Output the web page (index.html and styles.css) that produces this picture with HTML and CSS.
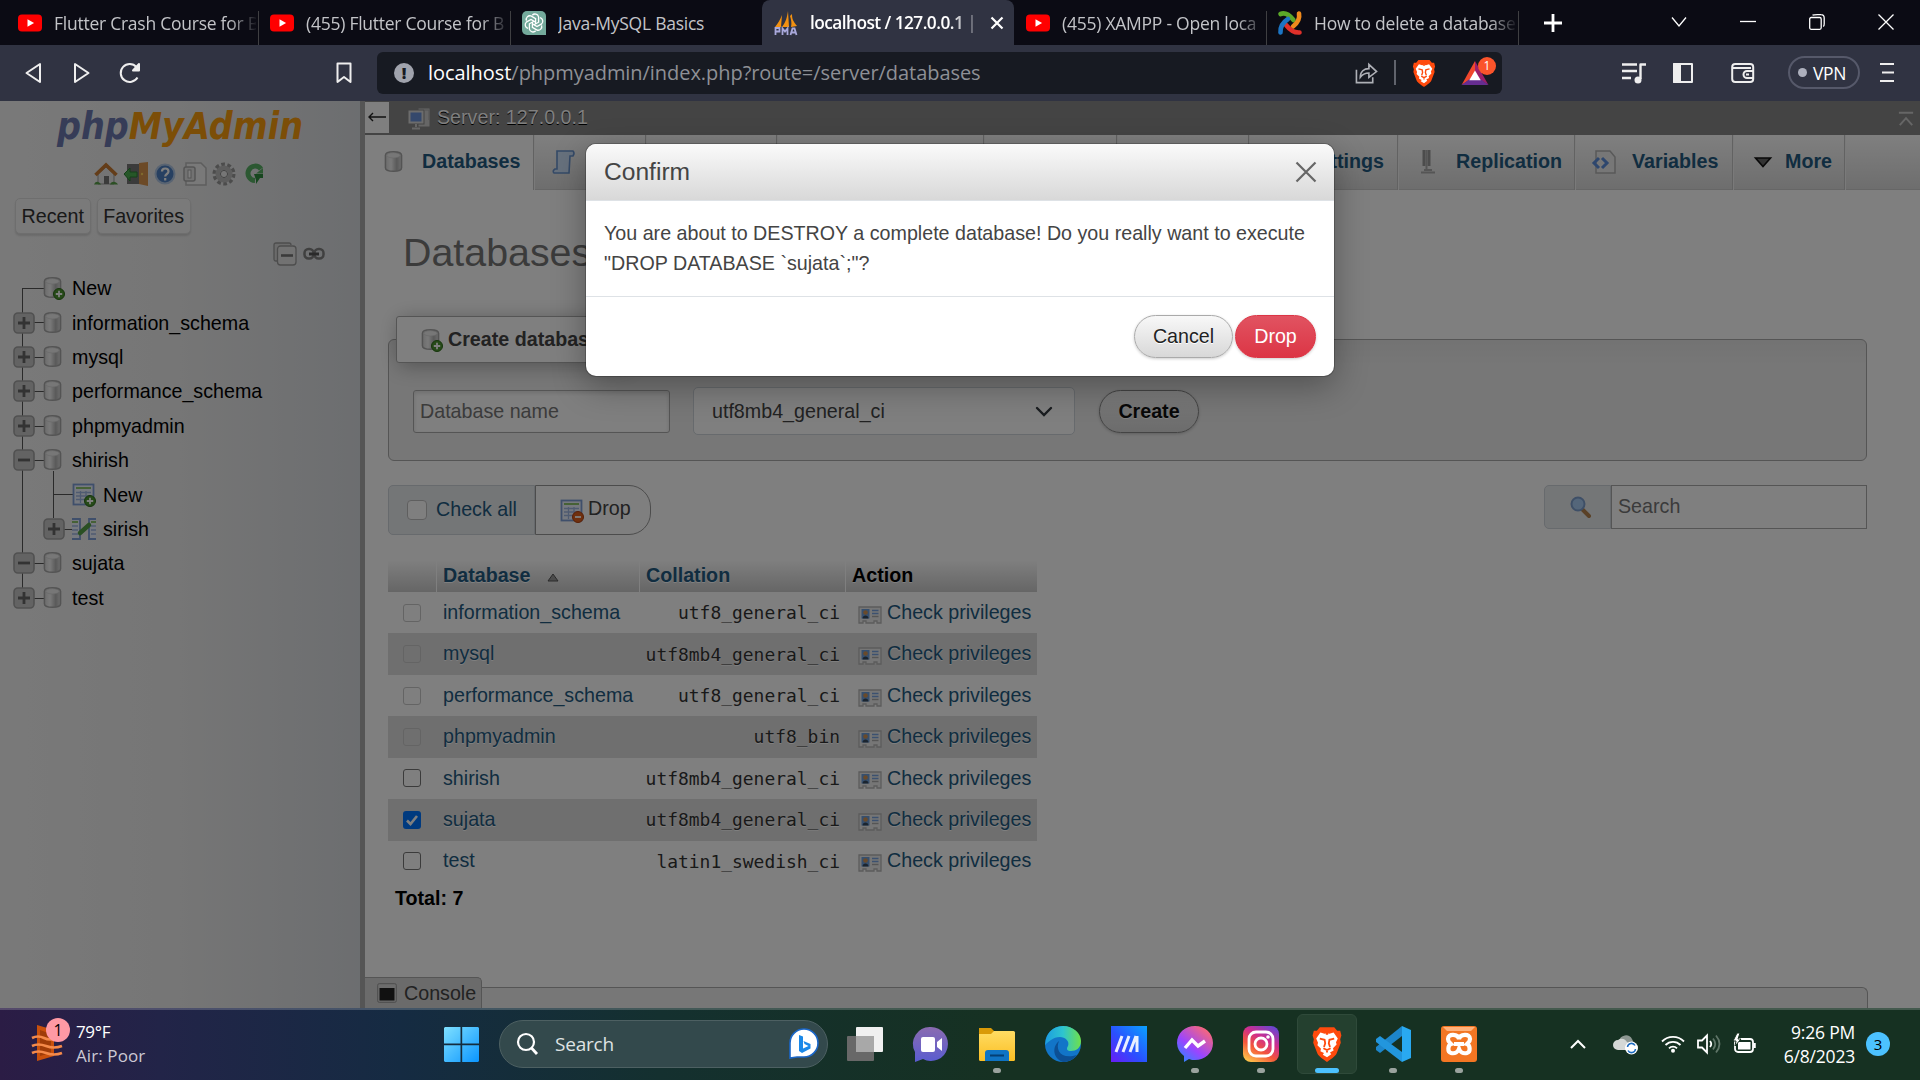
FILE: index.html
```html
<!DOCTYPE html>
<html lang="en">
<head>
<meta charset="utf-8">
<title>localhost / 127.0.0.1 | phpMyAdmin</title>
<link rel="stylesheet" href="styles.css">
</head>
<body>
<svg class="defs" width="0" height="0">
  <defs>
    <linearGradient id="cyl" x1="0" x2="1"><stop offset="0" stop-color="#d8d8d8"/><stop offset=".35" stop-color="#f4f4f4"/><stop offset=".7" stop-color="#b4b4b4"/><stop offset="1" stop-color="#dedede"/></linearGradient>
    <linearGradient id="wing" x1="0" y1="0" x2="1" y2="1"><stop offset="0" stop-color="#7fe0ff"/><stop offset="1" stop-color="#0a95ff"/></linearGradient>
    <linearGradient id="fold" x1="0" y1="0" x2="0" y2="1"><stop offset="0" stop-color="#ffdc63"/><stop offset="1" stop-color="#fbbf24"/></linearGradient>
    <linearGradient id="edge" x1="0" y1="0" x2="1" y2="0"><stop offset="0" stop-color="#1c9de0"/><stop offset=".5" stop-color="#2ec4cf"/><stop offset="1" stop-color="#6fe04a"/></linearGradient>
    <linearGradient id="mi" x1="0" y1="1" x2="1" y2="0"><stop offset="0" stop-color="#6a1cf5"/><stop offset=".45" stop-color="#2a50ff"/><stop offset="1" stop-color="#0aa2ff"/></linearGradient>
    <linearGradient id="msg" x1="0" y1="1" x2=".8" y2="0"><stop offset="0" stop-color="#1890ff"/><stop offset=".45" stop-color="#9a45ff"/><stop offset="1" stop-color="#ff6a70"/></linearGradient>
    <linearGradient id="ig" x1=".2" y1="1" x2=".8" y2="0"><stop offset="0" stop-color="#fdc24a"/><stop offset=".35" stop-color="#f4553a"/><stop offset=".65" stop-color="#cf2e8e"/><stop offset="1" stop-color="#6a45d0"/></linearGradient>
    <linearGradient id="vid" x1="0" y1="0" x2="0" y2="1"><stop offset="0" stop-color="#8a6bb0"/><stop offset="1" stop-color="#5a5cd0"/></linearGradient>
    <symbol id="yt" viewBox="0 0 24 24"><rect x="0" y="3.5" width="24" height="17" rx="4" fill="#f00"/><path d="M9.5 8.3v7.4l6.6-3.7z" fill="#fff"/></symbol>
    <symbol id="db" viewBox="0 0 20 24"><path d="M1.5 5.5C1.5 .5 18.500 .5 18.500 5.500V18.500C18.500 23.500 1.500 23.500 1.500 18.500z" fill="url(#cyl)" stroke="#a8a8a8" stroke-width="1.600"/><ellipse cx="10" cy="5.500" rx="7" ry="2.800" fill="#eee" stroke="#ccc" stroke-width=".6"/></symbol>
    <symbol id="add" viewBox="0 0 12 12"><circle cx="6" cy="6" r="5.500" fill="#4d9530" stroke="#2d6b1a"/><path d="M6 2.800v6.400M2.800 6h6.400" stroke="#fff" stroke-width="1.800"/></symbol>
    <symbol id="plus" viewBox="0 0 22 22"><rect x="1" y="1" width="20" height="20" rx="4" fill="#c6c6c6" stroke="#a2a2a2" stroke-width="1.600"/><path d="M5 11h12M11 5v12" stroke="#666" stroke-width="2.800"/></symbol>
    <symbol id="minus" viewBox="0 0 22 22"><rect x="1" y="1" width="20" height="20" rx="4" fill="#c6c6c6" stroke="#a2a2a2" stroke-width="1.600"/><path d="M5 11h12" stroke="#666" stroke-width="2.800"/></symbol>
    <symbol id="table" viewBox="0 0 24 24"><rect x="1.500" y="1.500" width="20" height="20" fill="#edf3ff" stroke="#7f9fd6" stroke-width="1.800"/><path d="M4 5h15" stroke="#8cc36c" stroke-width="2"/><path d="M4 9.500h15M4 13h15M4 16.500h15M8.500 8v12M14 8v12" stroke="#9fb6e2" stroke-width="1.300" fill="none"/></symbol>
    <symbol id="priv" viewBox="0 0 24 22"><path d="M1 3h22v16h-4v-2h-3v2H8v-2H5v2H1z" fill="#ececec" stroke="#b8b8b8" stroke-width="1.300"/><rect x="3.500" y="5" width="8" height="9.500" fill="#6c9fdc"/><circle cx="7.500" cy="8.500" r="2.300" fill="#d29455"/><path d="M4.500 14.500c0-4 6-4 6 0z" fill="#35495f"/><path d="M14 6.500h6.500M14 9.500h6.500" stroke="#78a2e0" stroke-width="1.400"/><path d="M14 12.500h6.500" stroke="#aaa" stroke-width="1.400"/></symbol>
    <symbol id="lion" viewBox="0 0 26 30"><path d="M7 1h12l2.500 3 2.500 0 1 4-1 3 .5 3-3.500 9c-1 2.500-6 5.500-8 7-2-1.500-7-4.500-8-7L1.500 14 2 11 1 8l1-4h2.500z" fill="#ff4a0d"/><path d="M7.500 5.500 11 6.500l2-.5 2 .5 3.500-1 3.500 5-1.500 3 .5 2-3 3 .5 2-3 1.500 1 1.500-3.500 2.500L9.500 24l1-1.500-3-1.500.5-2-3-3 .5-2L4 10.500z" fill="#fff"/><path d="M7 10.500l4 1 .5 3-1 3M19 10.500l-4 1-.5 3 1 3M10 18.500l3 1.500 3-1.500M13 20v2M12 6.500h2" stroke="#ff4a0d" stroke-width="1.500" fill="none"/></symbol>
  </defs>
</svg>

<header class="tabstrip">
  <div class="tab"><svg class="fav"><use href="#yt"/></svg><span class="tab-title">Flutter Crash Course for B</span></div>
  <div class="tab"><svg class="fav"><use href="#yt"/></svg><span class="tab-title">(455) Flutter Course for B</span></div>
  <div class="tab plain"><svg class="fav" viewBox="0 0 24 24"><path d="M5 0h14a5 5 0 0 1 5 5v19H5a5 5 0 0 1-5-5V5a5 5 0 0 1 5-5z" fill="#74aa9c"/><g fill="none" stroke="#fff" stroke-width="1.300"><path d="M10.300 4.200a3.700 3.700 0 0 1 6.300 1.600v5.400l-4.600 2.600"/><path d="M10.300 4.200a3.700 3.700 0 0 1 6.300 1.600v5.400l-4.600 2.600" transform="rotate(60 12 12)"/><path d="M10.300 4.200a3.700 3.700 0 0 1 6.300 1.600v5.400l-4.600 2.600" transform="rotate(120 12 12)"/><path d="M10.300 4.200a3.700 3.700 0 0 1 6.300 1.600v5.400l-4.600 2.600" transform="rotate(180 12 12)"/><path d="M10.300 4.200a3.700 3.700 0 0 1 6.300 1.600v5.400l-4.600 2.600" transform="rotate(240 12 12)"/><path d="M10.300 4.200a3.700 3.700 0 0 1 6.300 1.600v5.400l-4.600 2.600" transform="rotate(300 12 12)"/></g></svg><span class="tab-title full">Java-MySQL Basics</span></div>
  <div class="tab active"><svg class="fav" viewBox="0 0 24 24"><path d="M8 4 7 16H1C4 12 6 9 8 4zM14 0l1 16H8C12 11 13 6 14 0zM18 3c0 5 1 7 5 12l-6 1c1-4 0-8-1-11z" fill="#f29111"/><path d="M1.500 24v-7h4v3.500h-4M8.500 24v-6.500l2.500 3 2.500-3V24M16.500 24l2-6.500h2l2 6.500M17 21.500h5" fill="none" stroke="#a9a9dc" stroke-width="1.800"/></svg><span class="tab-title">localhost / 127.0.0.1 |</span><svg class="tab-x" viewBox="0 0 14 14"><path d="M1.500 1.500l11 11M12.500 1.500l-11 11" stroke="#fff" stroke-width="2.200"/></svg></div>
  <div class="tab"><svg class="fav"><use href="#yt"/></svg><span class="tab-title">(455) XAMPP - Open loca</span></div>
  <div class="tab"><svg class="fav" viewBox="0 0 24 24"><g fill="none" stroke-width="4.600" stroke-linecap="round"><path d="M2.500 3c5-2 9 1 13 6" stroke="#5ba829"/><path d="M21 2.500c1 5-1 9-6 13" stroke="#f08a1c"/><path d="M21.500 21.500C16 22 12 19 8 14" stroke="#e0302a"/><path d="M2.500 21.500C2 16 4 12 10 8" stroke="#1c75c4"/></g></svg><span class="tab-title">How to delete a database</span></div>
  <svg class="new-tab" viewBox="0 0 20 20"><path d="M10 1v18M1 10h18" stroke="#fff" stroke-width="2.800"/></svg>
  <div class="win">
    <svg width="16" height="16" viewBox="0 0 16 16"><path d="M1 3.500l7 8.500 7-8.500"/></svg>
    <svg width="16" height="16" viewBox="0 0 16 16"><path d="M0 7.500h16"/></svg>
    <svg width="16" height="16" viewBox="0 0 16 16"><rect x=".7" y="3.500" width="11.500" height="11.800" rx="1.500"/><path d="M3.500 1.200C5 .5 10 .6 12 .7q3.200 0 3.200 3.300v6q0 2-1 2.500"/></svg>
    <svg width="16" height="16" viewBox="0 0 16 16"><path d="M.5.500l15 15M15.500.500l-15 15"/></svg>
  </div>
</header>

<div class="toolbar">
  <svg class="ic back" viewBox="0 0 22 22"><path d="M17 2v18L3.500 11z"/></svg>
  <svg class="ic fwd" viewBox="0 0 22 22"><path d="M5 2v18l13.500-9z"/></svg>
  <svg class="ic reload" viewBox="0 0 22 22"><path d="M18.500 15.500A9 9 0 1 1 17.500 5"/><path d="M20 2v6.500h-6z" fill="#eee"/></svg>
  <svg class="ic mark" viewBox="0 0 16 22"><path d="M1.500 1.500h13v18.500L8 15l-6.500 5z"/></svg>
  <div class="urlbar">
    <span class="info">!</span>
    <span class="url"><b>localhost</b>/phpmyadmin/index.php?route=/server/databases</span>
    <svg class="share" viewBox="0 0 24 24"><path d="M1.500 9v13.500h17V17M5.500 17c0-6 4-9 9-9V3.500l8 7.500-8 6v-4.500c-4 0-6.500 1-9 4.500z"/></svg>
    <i class="bar"></i>
    <svg class="lion"><use href="#lion"/></svg>
    <span class="bat"><svg viewBox="0 0 28 25"><path d="M14 0 0 25l14-9z" fill="#f0472d"/><path d="M14 0l14 25-14-9z" fill="#9c1f6b"/><path d="M0 25h28l-8-6H8z" fill="#662d91"/><path d="M14 10 8 20h12z" fill="#fff"/></svg><em>1</em></span>
  </div>
  <svg class="ic music" viewBox="0 0 24 22"><path d="M0 2.500h15M0 9h15M0 16h9M18.500 17V2.500H24" stroke-width="2.400"/><circle cx="16" cy="18" r="3.500" fill="#eee" stroke="none"/></svg>
  <svg class="ic side" viewBox="0 0 20 20"><rect x="1" y="1" width="18" height="18"/><path d="M1 1h6v18H1z" fill="#eee"/></svg>
  <svg class="ic wallet" viewBox="0 0 24 22"><rect x="1.200" y="2" width="21" height="18" rx="3"/><path d="M2 6h18M22 9h-6a3.500 3.500 0 0 0 0 7h6M15 12.500h3"/></svg>
  <span class="vpn"><i></i>VPN</span>
  <svg class="ic menu" viewBox="0 0 14 22"><path d="M0 2h14M2 10.500h12M0 19h14"/></svg>
</div>

<div class="page">
  <aside class="sidebar">
    <svg class="logo" viewBox="0 0 250 46"><text x="2" y="33" textLength="246" lengthAdjust="spacingAndGlyphs"><tspan class="php">php</tspan><tspan class="my">MyAdmin</tspan></text></svg>
    <div class="quick">
      <svg viewBox="0 0 24 24"><path d="M4 12v10h16V12l-8-7z" fill="#e8e8e8" stroke="#999"/><path d="M10 14h5v8h-5z" fill="#777"/><path d="M1.500 13 12 3l10.500 10" fill="none" stroke="#c87a32" stroke-width="3.600"/><path d="M0 22.500c2-4 5-3 7 0zM16 22.500c2-4 6-3 8 0z" fill="#58a048"/></svg>
      <svg viewBox="0 0 24 24"><path d="M3 2h15v20H3z" fill="#777"/><path d="M15 1l9-1v24l-9-2z" fill="#d8944e"/><path d="M0 12l6-6v4h7v5H6v4z" fill="#4caf50" stroke="#2b8034"/><circle cx="18" cy="12" r="1.200" fill="#ffd35c"/></svg>
      <svg viewBox="0 0 24 24"><circle cx="12" cy="12" r="9.500" fill="#4f81c2" stroke="#b3c8e4" stroke-width="2"/><path d="M9 9.500c0-4 6.500-4 6.500 0 0 2.500-3.300 2.500-3.300 5M12.200 16v2.500" fill="none" stroke="#fff" stroke-width="2.200"/></svg>
      <svg viewBox="0 0 24 24"><path d="M3 1h15l5 5v17H3z" fill="#f2f2f2" stroke="#bbb" stroke-width="1.500"/><rect x="1" y="5" width="11" height="14" rx="2" fill="#e4e4e4" stroke="#aaa" stroke-width="1.500"/><rect x="5" y="8" width="3" height="8" fill="#fff" stroke="#aaa"/></svg>
      <svg viewBox="0 0 24 24"><circle cx="12" cy="12" r="9.500" fill="none" stroke="#999" stroke-width="4" stroke-dasharray="3.600 2.370"/><circle cx="12" cy="12" r="6.300" fill="none" stroke="#bbb" stroke-width="4.500"/><circle cx="12" cy="12" r="3.600" fill="#ececec" stroke="#888"/></svg>
      <svg viewBox="0 0 24 24"><path d="M19 7a7.200 7.200 0 1 0-6 11.500" fill="none" stroke="#58b065" stroke-width="5"/><path d="M12 12h9v4h-3l-4 6v-4z" fill="#2f8d3e"/><path d="M14 11.500h7V6z" fill="#58b065"/></svg>
    </div>
    <div class="drops"><span>Recent</span><span>Favorites</span></div>
    <div class="tree-tools">
      <svg width="24" height="24" viewBox="0 0 24 24"><path d="M5 19H3q-2 0-2-2V3q0-2 2-2h13q2 0 2 2" fill="#d6d6d6" stroke="#9a9a9a" stroke-width="1.300"/><rect x="4.500" y="4" width="18.500" height="19" rx="3" fill="#e4e4e4" stroke="#9a9a9a" stroke-width="1.300"/><path d="M8 13.500h12" stroke="#777" stroke-width="2.600"/></svg>
      <svg width="22" height="14" viewBox="0 0 22 14"><rect x="1.500" y="2" width="9" height="9.500" rx="4" fill="none" stroke="#808080" stroke-width="2.500"/><rect x="11.500" y="2" width="9" height="9.500" rx="4" fill="none" stroke="#808080" stroke-width="2.500"/><path d="M6 7h10" stroke="#555" stroke-width="3"/></svg>
    </div>
    <ul class="tree">
      <li class="first"><i class="gap"></i><span class="node"><svg class="db"><use href="#db"/></svg><svg class="badge"><use href="#add"/></svg></span>New</li>
      <li><svg class="tog"><use href="#plus"/></svg><span class="node"><svg class="db"><use href="#db"/></svg></span>information_schema</li>
      <li><svg class="tog"><use href="#plus"/></svg><span class="node"><svg class="db"><use href="#db"/></svg></span>mysql</li>
      <li><svg class="tog"><use href="#plus"/></svg><span class="node"><svg class="db"><use href="#db"/></svg></span>performance_schema</li>
      <li><svg class="tog"><use href="#plus"/></svg><span class="node"><svg class="db"><use href="#db"/></svg></span>phpmyadmin</li>
      <li><svg class="tog"><use href="#minus"/></svg><span class="node"><svg class="db"><use href="#db"/></svg></span>shirish</li>
      <li class="sub"><i class="gap"></i><span class="node tbl"><svg class="tb"><use href="#table"/></svg><svg class="badge"><use href="#add"/></svg></span>New</li>
      <li class="sub last"><svg class="tog"><use href="#plus"/></svg><span class="node tbl"><svg class="tb" viewBox="0 0 24 24"><path d="M0 2h8v20H0M24 2h-7v20h7" fill="#edf3ff" stroke="#7f9fd6" stroke-width="1.800"/><path d="M0 5h6M19 5h5" stroke="#8cc36c" stroke-width="2"/><path d="M0 9h6M0 13h6M0 17h6M19 9h5M19 13h5M19 17h5" stroke="#9fb6e2" stroke-width="1.500"/><path d="M8 16l9-8" stroke="#54a048" stroke-width="4.500" stroke-linecap="round"/></svg></span>sirish</li>
      <li><svg class="tog"><use href="#minus"/></svg><span class="node"><svg class="db"><use href="#db"/></svg></span>sujata</li>
      <li class="end"><svg class="tog"><use href="#plus"/></svg><span class="node"><svg class="db"><use href="#db"/></svg></span>test</li>
    </ul>
  </aside>

  <main class="main">
    <div class="server">
      <span class="collapse"><svg width="20" height="12" viewBox="0 0 20 12"><path d="M19 6H2M6 2 2 6l4 4" fill="none" stroke="#222" stroke-width="1.400"/></svg></span>
      <svg class="srv" viewBox="0 0 24 24"><path d="M11 2h12v19H11z" fill="#ccc" stroke="#888"/><path d="M18 4h4v10" fill="none" stroke="#aaa"/><rect x="1" y="4" width="16" height="14" fill="#d8d8d8" stroke="#888"/><rect x="3.500" y="6.500" width="11" height="9" fill="#6890d8"/><path d="M9 18v3M5 22.500h8" stroke="#ccc" stroke-width="2"/></svg>
      <span>Server: 127.0.0.1</span>
      <svg class="top" viewBox="0 0 18 18"><path d="M1 2h16M2 16l7-8 7 8" fill="none" stroke="#ccc" stroke-width="2.200"/></svg>
    </div>
    <nav class="nav">
      <a class="n-db on"><svg class="db"><use href="#db"/></svg>Databases</a>
      <a class="n-sql"><svg width="24" height="24" viewBox="0 0 24 24"><path d="M5 1h16q2 2 0 5h-3l-1 17H2q-2-2 1-4h2z" fill="#cfe2fb" stroke="#6a95cf" stroke-width="1.600"/></svg>SQL</a>
      <a class="n-stat">Status</a>
      <a class="n-user">User accounts</a>
      <a class="n-exp">Export</a>
      <a class="n-imp">Import</a>
      <a class="n-set">Settings</a>
      <a class="n-rep"><svg width="20" height="24" viewBox="0 0 20 24"><path d="M6 0v16M11 0v16" stroke="#999" stroke-width="3"/><path d="M8.500 0v20M3 22.500h14M6 20h8" stroke="#aaa" stroke-width="2"/></svg>Replication</a>
      <a class="n-var"><svg width="24" height="24" viewBox="0 0 24 24"><path d="M4 1h14l5 6v16H4z" fill="#eee" stroke="#b2b2b2" stroke-width="1.500"/><path d="M7 8l-5 5 5 5M10 8l5 5-5 5" fill="none" stroke="#5c8edc" stroke-width="3"/></svg>Variables</a>
      <a class="n-more"><svg width="18" height="12" viewBox="0 0 18 12"><path d="M1.500 2h15L9 10.500z" fill="#666" stroke="#111" stroke-width="1.600"/></svg>More</a>
    </nav>
    <section class="content">
      <h2>Databases</h2>
      <div class="fieldset">
        <div class="legend"><span class="node"><svg class="db"><use href="#db"/></svg><svg class="badge"><use href="#add"/></svg></span>Create database</div>
        <div class="form">
          <div class="input">Database name</div>
          <div class="select">utf8mb4_general_ci<svg width="18" height="12" viewBox="0 0 18 12"><path d="M2 2l7 7 7-7" fill="none" stroke="#343a40" stroke-width="2.400" stroke-linecap="round"/></svg></div>
          <div class="btn create">Create</div>
        </div>
      </div>
      <div class="actions">
        <div class="checkall"><i class="big"></i>Check all</div>
        <div class="dropbtn"><span class="node"><svg class="tb"><use href="#table"/></svg><svg class="badge" viewBox="0 0 12 12"><circle cx="6" cy="6" r="5.500" fill="#e0601c" stroke="#b04010"/><path d="M3 6h6" stroke="#fff" stroke-width="1.800"/></svg></span>Drop</div>
        <div class="search"><span><svg width="24" height="24" viewBox="0 0 24 24"><path d="M12 13l8 8" stroke="#b5834e" stroke-width="4" stroke-linecap="round"/><circle cx="9" cy="9" r="6.500" fill="#a8cdf5" stroke="#7d9fce" stroke-width="2"/></svg></span><div class="s-in">Search</div></div>
      </div>
      <div class="grid head"><span></span><span class="lnk">Database<svg width="12" height="9" viewBox="0 0 12 9"><path d="M6 1l5 7H1z" fill="#999" stroke="#555"/></svg></span><span class="lnk">Collation</span><span>Action</span></div>
      <div class="grid"><i class="cb off"></i><a>information_schema</a><code>utf8_general_ci</code><a><svg class="pr"><use href="#priv"/></svg>Check privileges</a></div>
      <div class="grid alt"><i class="cb off"></i><a>mysql</a><code>utf8mb4_general_ci</code><a><svg class="pr"><use href="#priv"/></svg>Check privileges</a></div>
      <div class="grid"><i class="cb off"></i><a>performance_schema</a><code>utf8_general_ci</code><a><svg class="pr"><use href="#priv"/></svg>Check privileges</a></div>
      <div class="grid alt"><i class="cb off"></i><a>phpmyadmin</a><code>utf8_bin</code><a><svg class="pr"><use href="#priv"/></svg>Check privileges</a></div>
      <div class="grid"><i class="cb"></i><a>shirish</a><code>utf8mb4_general_ci</code><a><svg class="pr"><use href="#priv"/></svg>Check privileges</a></div>
      <div class="grid alt"><i class="cb sel"><svg viewBox="0 0 18 18"><path d="M4 9.500l3.500 3.500L14 5" fill="none" stroke="#fff" stroke-width="2.600"/></svg></i><a>sujata</a><code>utf8mb4_general_ci</code><a><svg class="pr"><use href="#priv"/></svg>Check privileges</a></div>
      <div class="grid"><i class="cb"></i><a>test</a><code>latin1_swedish_ci</code><a><svg class="pr"><use href="#priv"/></svg>Check privileges</a></div>
      <div class="total">Total: 7</div>
    </section>
    <div class="console-row">
      <div class="console"><svg width="20" height="20" viewBox="0 0 20 20"><rect x=".7" y=".7" width="18.600" height="18.600" rx="1.500" fill="#d8d8d8" stroke="#999"/><rect x="2.500" y="5" width="15" height="12.500" fill="#222"/></svg>Console</div>
      <div class="foot"></div>
    </div>
  </main>

  <div class="backdrop"></div>
  <div class="modal">
    <div class="m-head">Confirm<svg width="22" height="22" viewBox="0 0 22 22"><path d="M1.500 1.500l19 19M20.500 1.500l-19 19" stroke="#666" stroke-width="2.200"/></svg></div>
    <div class="m-body">You are about to DESTROY a complete database! Do you really want to execute "DROP DATABASE `sujata`;"?</div>
    <div class="m-foot"><div class="btn cancel">Cancel</div><div class="btn danger">Drop</div></div>
  </div>
</div>

<footer class="taskbar">
  <div class="weather">
    <div class="w-ic"><svg width="32" height="36" viewBox="0 0 32 36"><path d="M5 0l17 5v26L5 36z" fill="#c8500c"/><path d="M8 5l11 4v19l-11 3z" fill="#a03c08"/><path d="M0 13q6-3 12 0t13 0M0 21q6-3 14 0t16 0M0 28q6-3 14 0t16 0" fill="none" stroke="#f58a4a" stroke-width="2.600"/></svg><em>1</em></div>
    <div class="w-tx">79°F<br><span>Air: Poor</span></div>
  </div>
  <svg class="start" viewBox="0 0 35 35"><path d="M1 0h15.500v16.500H0V1zM18.200 0H34l1 1v15.500H18.200zM0 18.200h16.500V35H1l-1-1zM18.200 18.200H35V34l-1 1H18.200z" fill="url(#wing)"/></svg>
  <div class="tsearch">
    <svg width="24" height="24" viewBox="0 0 24 24"><circle cx="10" cy="10" r="8" fill="none" stroke="#fff" stroke-width="2.200"/><path d="M15.500 16l5.500 6" stroke="#fff" stroke-width="2.800"/></svg>
    <span>Search</span>
    <svg class="bing" width="30" height="30" viewBox="0 0 30 30"><path d="M1 29V14A14 14 0 1 1 15 28H8z" fill="#fff" stroke="#1a66c8" stroke-width="1.600"/><path d="M10 6l4 1.500v12L19.500 17l-4-2-1-3 7 3v4.500L13 24l-3-2z" fill="#1a88e8"/></svg>
  </div>
  <div class="apps">
    <div><svg viewBox="0 0 36 36"><rect x="0" y="10" width="27" height="25" rx="1" fill="#686868"/><rect x="9" y="1" width="27" height="25" rx="1" fill="#f0f0f0"/><path d="M9 10h18v16H9z" fill="#a8a8a8"/></svg></div>
    <div><svg viewBox="0 0 36 36"><path d="M18 1a17 17 0 1 1-8 32L2 36V26A17 17 0 0 1 18 1z" fill="url(#vid)"/><rect x="8" y="11" width="14" height="15" rx="2" fill="#fff"/><path d="M24 16l5-4v13l-5-4z" fill="#fff"/></svg></div>
    <div class="run"><svg viewBox="0 0 36 36"><rect x="0" y="5" width="36" height="30" rx="1.500" fill="url(#fold)"/><path d="M0 2h12l3 3-3 3H0z" fill="#d99a08"/><path d="M6 35v-8q0-3 3-3h18q3 0 3 3v8z" fill="#0f74c4"/><path d="M11 29.500h14" stroke="#053f73" stroke-width="2"/></svg></div>
    <div><svg viewBox="0 0 36 36"><circle cx="18" cy="18" r="18" fill="#1275c8"/><path d="M1 13C4 3 12 0 18 0c10 0 18 7 18 15 0 7-5 10-10 10-4 0-5-2-3-5 2-5-3-9-8-9-7 0-12 5-15 8z" fill="url(#edge)"/><path d="M14 15c-4 9 2 19 18 14-4 5-9 7-14 7C9 33 6 22 14 15z" fill="#0c4f94"/></svg></div>
    <div><svg viewBox="0 0 36 36"><path d="M0 0h36v36H0z" fill="url(#mi)"/><path d="M5 26 11 10M12 26l6-16M19 26l6-16M26 10v16" stroke="#fff" stroke-width="3" opacity=".9"/></svg></div>
    <div class="run"><svg viewBox="0 0 36 36"><path d="M18 0c10 0 18 7 18 17S28 34 18 34c-2 0-4 0-6-1l-5 3v-6A17 17 0 0 1 0 17C0 7 8 0 18 0z" fill="url(#msg)"/><path d="M8 22l7-8 6 6 7-5" fill="none" stroke="#fff" stroke-width="3.400"/></svg></div>
    <div class="run"><svg viewBox="0 0 36 36"><rect width="36" height="36" rx="8" fill="url(#ig)"/><rect x="6" y="6" width="24" height="24" rx="7" fill="none" stroke="#fff" stroke-width="2.800"/><circle cx="18" cy="18" r="6" fill="none" stroke="#fff" stroke-width="2.800"/><circle cx="25" cy="11" r="1.800" fill="#fff"/></svg></div>
    <div class="cur"><svg viewBox="0 0 36 36"><use href="#lion" x="2" y="0" width="32" height="36"/></svg></div>
    <div class="run"><svg viewBox="0 0 36 36"><path d="M27 0l9 4v28l-9 4z" fill="#29a9f0"/><path d="M27 0v10L5 27l-4-3V21z" fill="#1d86ca"/><path d="M27 36V26L5 10l-4 3v3z" fill="#2296dd"/></svg></div>
    <div class="run"><svg viewBox="0 0 36 36"><rect width="36" height="36" rx="3" fill="#f37623"/><path d="M2 1h32l-4 4H6z" fill="#ffb27c"/><path d="M18 13c-1-5-11-6-11 0 0 3 2 4 3 5-3 1-4 8 0 9 4 1 7-1 8-4 1 3 4 5 8 4 4-1 3-8 0-9 1-1 3-2 3-5 0-6-10-5-11 0zM13 18h10" fill="none" stroke="#fff" stroke-width="4.200"/></svg></div>
  </div>
  <div class="tray">
    <svg class="t-up" width="18" height="12" viewBox="0 0 18 12"><path d="M2 10l7-7 7 7" fill="none" stroke="#fff" stroke-width="2"/></svg>
    <svg class="t-cloud" width="26" height="22" viewBox="0 0 26 22"><path d="M6 8a7 7 0 0 1 13-2l3 6-8 4z" fill="#8d9792"/><path d="M5 17a5 5 0 0 1 0-10c4-3 8 0 9 2l6 4-4 4z" fill="#d4d8d6"/><circle cx="18.500" cy="15" r="6.500" fill="#fff"/><path d="M14.500 14a4 4 0 0 1 7.500-1.500M22.500 16a4 4 0 0 1-7.500 1.500" fill="none" stroke="#1a6bc0" stroke-width="1.500"/></svg>
    <svg class="t-wifi" width="24" height="18" viewBox="0 0 24 18"><path d="M1 6.500a15.500 15.500 0 0 1 22 0M4.500 10a10.500 10.500 0 0 1 15 0M8 13.300a5.600 5.600 0 0 1 8 0" fill="none" stroke="#fff" stroke-width="1.800"/><circle cx="12" cy="15.800" r="2" fill="#fff"/></svg>
    <svg class="t-vol" width="24" height="20" viewBox="0 0 24 20"><path d="M1 6.500h4l5-5v17l-5-5H1zM13 7q2.500 3 0 6" fill="none" stroke="#fff" stroke-width="1.800"/><path d="M16 4.500q4.500 5.500 0 11M19 1.500q7 8.500 0 17" fill="none" stroke="#5f7568" stroke-width="1.800"/></svg>
    <svg class="t-bat" width="24" height="20" viewBox="0 0 24 20"><rect x="2" y="5" width="18" height="13" rx="3" fill="none" stroke="#fff" stroke-width="1.800"/><rect x="5" y="8" width="12.500" height="7.500" fill="#fff"/><path d="M21.500 9v5" stroke="#fff" stroke-width="2.500"/><path d="M4-1 0 7h3l-1 5 6-7H5l2-6z" fill="#fff" stroke="#16301f"/></svg>
    <div class="clock">9:26 PM<br>6/8/2023</div>
    <span class="count">3</span>
  </div>
</footer>
</body>
</html>
```
FILE: styles.css
```css
* { box-sizing: border-box; }
body {
  margin: 0; width: 1920px; height: 1080px; overflow: hidden;
  display: flex; flex-direction: column;
  font-family: "Open Sans", "Noto Sans", sans-serif;
  background: #0b0b14;
}
svg { display: block; flex: none; overflow: visible; }
.defs { position: absolute; }
em, i { font-style: normal; }

/* browser tab strip */
.tabstrip { height: 45px; flex: none; display: flex; padding-left: 6px; background: #0b0b14; color: #c3c4c8; }
.tab { width: 252px; padding-left: 12px; display: flex; align-items: center; position: relative; }
.tab::after { content: ""; position: absolute; right: -1px; top: 11px; bottom: 0; width: 1px; background: #3f3f42; }
.tab.plain::after, .tab.active::after { display: none; }
.fav { width: 24px; height: 24px; margin-right: 12px; }
.tab-title { width: 202px; overflow: hidden; white-space: nowrap; font-size: 17.500px; letter-spacing: -.25px; line-height: 26px; -webkit-mask-image: linear-gradient(90deg, #000 175px, transparent 204px); mask-image: linear-gradient(90deg, #000 175px, transparent 204px); }
.tab-title.full { mask-image: none; -webkit-mask-image: none; }
.tab.active { background: #303342; border-radius: 8px 8px 0 0; color: #fff; }
.tab.active .tab-title { width: 170px; font-size: 17.300px; font-weight: 600; letter-spacing: -.55px; -webkit-mask-image: linear-gradient(90deg, #000 140px, transparent 175px); mask-image: linear-gradient(90deg, #000 140px, transparent 175px); }
.tab-x { width: 14px; height: 14px; margin-left: 10px; }
.new-tab { width: 20px; height: 20px; margin: 13px 0 0 25px; }
.win { margin-left: auto; display: flex; gap: 53px; padding: 14px 26px 0 0; fill: none; stroke: #fff; stroke-width: 1.3; }

/* address toolbar */
.toolbar { height: 56px; flex: none; background: #303342; display: flex; align-items: center; padding-bottom: 1px; }
.ic { fill: none; stroke: #eee; stroke-width: 2; stroke-linejoin: round; height: 22px; }
.back { width: 22px; margin-left: 23px; }
.fwd { width: 22px; margin-left: 25px; }
.reload { width: 22px; margin-left: 27px; }
.mark { width: 16px; margin-left: 195px; }
.urlbar { width: 1125px; height: 42px; margin-left: 25px; border-radius: 6px; background: #171a22; display: flex; align-items: center; padding-left: 17px; }
.info { width: 20px; height: 20px; border-radius: 50%; background: #a0a3ad; color: #171a22; font-weight: 800; font-size: 16px; line-height: 20px; text-align: center; }
.url { margin-left: 14px; width: 927px; font-size: 20px; letter-spacing: -.05px; color: #8e9096; white-space: nowrap; }
.url b { font-weight: 400; color: #fff; }
.share { width: 23px; height: 23px; fill: none; stroke: #aeb0b6; stroke-width: 1.7; }
.bar { width: 2px; height: 25px; background: #60636c; margin-left: 16px; }
.lion { width: 24px; height: 28px; margin-left: 16px; }
.bat { margin: 0 0 0 25px; position: relative; }
.bat svg { width: 28px; height: 24px; }
.bat em { position: absolute; left: 17px; top: -4px; width: 18px; height: 18px; border-radius: 50%; background: #fb542b; color: #fff; font-size: 12px; line-height: 18px; text-align: center; }
.music { width: 24px; margin-left: 120px; }
.side { width: 20px; height: 20px; margin-left: 27px; }
.wallet { width: 24px; margin-left: 38px; }
.vpn { width: 72px; height: 33px; margin-left: 33px; border: 2px solid #56596a; border-radius: 17px; color: #fff; font-size: 17.500px; letter-spacing: -.4px; line-height: 28px; display: flex; align-items: center; padding-left: 8px; }
.vpn i { width: 9px; height: 9px; border-radius: 50%; background: #adb0bd; margin-right: 6px; }
.menu { width: 14px; margin-left: 20px; }

/* phpMyAdmin page */
.page { height: 907px; flex: none; display: flex; position: relative; overflow: hidden; background: #fff; font: 19.68px/1.5 "Liberation Sans", Arial, sans-serif; color: #444; }
.backdrop { position: absolute; inset: 0; z-index: 2; background: rgba(0,0,0,.5); }
.sidebar { width: 365px; border-right: 5px solid #aaa; background: linear-gradient(90deg, #f3f3f3, #ececec 50%, #d9dce0); color: #000; }
.logo { width: 250px; height: 46px; margin: 5px 0 0 55px; font: italic bold 37px "DejaVu Sans", sans-serif; }
.php { fill: #6c78af; }
.my { fill: #f89c0e; }
.quick { display: flex; gap: 5.6px; margin: 10px 0 0 94px; }
.quick svg { width: 24px; height: 24px; }
.drops { display: flex; gap: 6px; margin: 12px 0 0 15px; color: #333; }
.drops span { height: 36px; padding: 0 5.600px; line-height: 34px; border: 1px solid #ddd; border-radius: 5px; box-shadow: 0 2px 2px rgba(0,0,0,.12); background: #f4f4f4; }
.tree-tools { display: flex; align-items: center; gap: 6px; margin: 8px 0 0 273px; }
.tree { list-style: none; margin: 5px 0 0; padding: 0; }
.tree li { height: 34.4px; padding-left: 13px; display: flex; align-items: center; position: relative; line-height: 34px; }
.tree li::before { content: ""; position: absolute; left: 22px; top: 0; bottom: 0; width: 1px; background: #555; }
.tree .first::before { top: 50%; }
.tree .end::before { bottom: 50%; }
.tree li::after { content: ""; position: absolute; left: 22px; top: 17px; width: 23px; height: 1px; background: #555; }
.tree .sub { padding-left: 43px; }
.tree .sub::after { left: 53px; width: 20px; }
.tree .sub .gap::before, .tree .last .tog + .node::before { content: ""; position: absolute; left: 53px; top: -6px; height: 34px; width: 1px; background: #555; }
.tree .last .tog + .node::before { top: -14px; height: 20px; left: 53px; }
.tog, .gap { width: 22px; height: 22px; margin-right: 8px; z-index: 1; }
.tree .gap { z-index: 0; }
.node { width: 22px; height: 24px; margin-right: 7px; display: block; position: relative; z-index: 1; flex: none; }
.tree .last .node { position: static; }
.db { width: 19px; height: 23px; }
.tb { width: 24px; height: 24px; }
.tree .tbl { margin-left: -1px; width: 24px; }
.badge { position: absolute; right: 0; bottom: 0; width: 12px; height: 12px; }

.main { width: 1555px; display: flex; flex-direction: column; }
.server { height: 34px; flex: none; background: #888; color: #fff; display: flex; align-items: center; text-shadow: 0 1px 0 #000; }
.collapse { width: 24px; height: 31px; margin-bottom: 2px; background: #fff; display: flex; align-items: center; justify-content: center; }
.srv { width: 24px; height: 24px; margin: 0 6px 0 18px; }
.top { width: 18px; height: 16px; margin: 2px 5px 0 auto; }
.nav { height: 55px; flex: none; display: flex; background: linear-gradient(#fff, #dcdcdc); border-bottom: 1px solid #ccc; }
.nav a { height: 55px; display: flex; align-items: center; padding: 0 0 2px 19px; border-right: 1px solid #c4c4c4; box-shadow: 1px 0 0 #f4f4f4; font-weight: bold; color: #235a81; white-space: nowrap; gap: 18px; }
.nav .on { background: #fff; gap: 19px; }
.n-db { width: 169px; }
.nav .n-sql { width: 112px; padding-left: 18px; }
.nav .n-stat { width: 131px; padding-left: 50px; }
.n-user { width: 207px; }
.n-exp { width: 133px; }
.n-imp { width: 132px; }
.nav .n-set { width: 149px; justify-content: flex-end; padding-right: 13px; }
.n-rep { width: 177px; }
.nav .n-rep { padding-left: 20px; }
.n-var { width: 158px; }
.nav .n-var { gap: 16px; padding-left: 17px; }
.n-more { width: 112px; }
.nav .n-more { gap: 13px; padding-left: 21px; }
.content { flex: 1; min-height: 0; padding: 39px 53px 0 23px; }
h2 { margin: 0 0 0 15px; font-size: 39.36px; font-weight: 400; line-height: 47px; color: #777; }
.fieldset { height: 122px; margin-top: 63px; border: 1px solid #aaa; border-radius: 6px; background: linear-gradient(#e6e6e6, #eee 20%); padding-left: 24px; }
.legend { width: 230px; height: 47px; margin: -24px 0 0 -17px; padding-left: 24px; display: flex; align-items: center; font-weight: bold; color: #444; background: #fff; border: 1px solid #aaa; border-radius: 3px; box-shadow: 3px 3px 20px rgba(0,0,0,.3); white-space: nowrap; }
.legend .node { width: 22px; margin-right: 5px; }
.form { display: flex; align-items: center; margin-top: 24px; height: 48px; }
.input { width: 257px; height: 43px; border: 1px solid #aaa; border-radius: 3px; background: #fff; color: #777; padding-left: 6px; line-height: 41px; box-shadow: inset 0 2px 4px #ddd; }
.select { width: 382px; height: 48px; margin-left: 23px; border: 1px solid #ced4da; border-radius: 5px; background: #fff; display: flex; align-items: center; justify-content: space-between; padding: 1px 21px 0 18px; }
.btn { border: 1px solid #aaa; border-radius: 22px; height: 43px; line-height: 41px; text-align: center; background: linear-gradient(#f8f8f8, #d8d8d8); color: #222; text-shadow: 0 1px 0 #fff; box-shadow: 0 1px 3px rgba(0,0,0,.2); }
.create { width: 100px; margin-left: 24px; font-weight: bold; color: #111; border-color: #888; }
.actions { display: flex; height: 50px; margin-top: 24px; }
.checkall { width: 147px; border: 1px solid #ced4da; border-radius: 5px 0 0 5px; background: #e9ecef; color: #235a81; display: flex; align-items: center; padding: 0 0 1px 18px; }
.big { width: 20px; height: 20px; border: 1px solid #bfbfbf; border-radius: 4px; background: #fff; margin: 1px 9px 0 0; }
.dropbtn { width: 116px; border: 1px solid #999; border-radius: 0 22px 22px 0; background: #fff; display: flex; align-items: center; padding: 0 0 2px 24px; }
.dropbtn .node { width: 24px; margin-right: 4px; top: 2px; }
.search { margin-left: auto; height: 44px; display: flex; }
.search > span { width: 67px; background: #e9ecef; border: 1px solid #ced4da; border-radius: 5px 0 0 5px; padding: 9px 0 0 24px; }
.s-in { width: 256px; background: #fff; border: 1px solid #aaa; color: #777; padding-left: 6px; line-height: 41px; }
.grid { width: 649px; height: 41.43px; display: grid; grid-template-columns: 55px 196px 207px 1fr; align-items: center; text-shadow: 0 1px 0 #fff; color: #235a81; }
.grid a { display: flex; align-items: center; color: #235a81; }
.grid code { font: 17.95px "DejaVu Sans Mono", monospace; color: #333; text-align: right; padding-right: 6px; white-space: nowrap; }
.grid.alt { background: #dedede; }
.pr { width: 24px; height: 22px; margin: 4px 5px 0 12px; }
.cb { width: 18px; height: 18px; border: 1.500px solid #767676; border-radius: 3px; background: #fff; margin-left: 15px; }
.cb.off { border-color: #c8c8c8; background: transparent; }
.cb.sel { background: #0075ff; border: 0; }
.head { height: 32px; margin-top: 25px; font-weight: bold; color: #000; background: linear-gradient(#fff, #ccc); }
.head span { padding-left: 6px; border-left: 1px solid #fff; margin-left: -7px; line-height: 28px; padding-bottom: 3px; display: flex; align-items: center; }
.head span:first-child { border: 0; }
.head span:nth-child(3) { margin-left: 0; }
.head span:nth-child(4) { margin-left: -1px; }
.head .lnk { color: #235a81; }
.head svg { margin: 5px 0 0 17px; }
.total { padding: 1px 0 0 7px; font-weight: bold; color: #000; line-height: 31px; }
.console-row { height: 31px; flex: none; display: flex; align-items: flex-end; }
.console { width: 117px; height: 31px; border: 1px solid #aaa; border-bottom: 0; border-left: 0; border-radius: 0 5px 0 0; background: #d6d6d6; display: flex; align-items: center; padding-left: 12px; color: #444; line-height: 30px; }
.console svg { margin-right: 7px; }
.foot { width: 1386px; height: 21px; border: 1px solid #aaa; border-left: 0; border-bottom: 0; border-radius: 0 6px 0 0; background: #eee; }

/* confirmation dialog */
.modal { position: absolute; z-index: 3; left: 586px; top: 43px; width: 748px; height: 232px; border-radius: 10px; background: #fff; overflow: hidden; box-shadow: 0 0 0 1px rgba(0,0,0,.2), 0 10px 34px rgba(0,0,0,.32); }
.m-head { height: 57px; padding: 0 17px 0 18px; display: flex; align-items: center; justify-content: space-between; font-size: 24.6px; background: linear-gradient(#fafafa, #d8d8d8); border-bottom: 1px solid #dee2e6; }
.m-body { height: 96px; padding: 18px 18px 0; border-bottom: 1px solid #dee2e6; }
.m-foot { display: flex; justify-content: flex-end; gap: 2px; padding: 18px 18px 0 0; }
.cancel { width: 99px; }
.danger { width: 81px; color: #fff; background: linear-gradient(#e15361, #dc3545); border-color: #dc3545; text-shadow: none; }

/* desktop taskbar */
.taskbar { height: 72px; flex: none; border-top: 2px solid rgba(255,255,255,.2); background: linear-gradient(90deg, #2b1c45, #222448 160px, #152b42 400px, #14302f 660px, #163122 1000px); background-origin: border-box; display: flex; color: #fff; font-size: 17px; }
.weather { display: flex; width: 444px; padding-left: 32px; }
.w-ic { position: relative; width: 44px; padding-top: 15px; }
.w-ic em { position: absolute; left: 14px; top: 8px; width: 24px; height: 24px; border-radius: 50%; background: #ff99a4; color: #000; font-size: 16px; line-height: 24px; text-align: center; }
.w-tx { padding-top: 10px; line-height: 24px; font-size: 17px; letter-spacing: -.35px; }
.w-tx span { color: #ccc9d4; letter-spacing: .1px; }
.start { width: 35px; height: 35px; margin-top: 17px; }
.tsearch { width: 329px; height: 48px; margin: 10px 0 0 20px; border: 1px solid #4d6062; border-radius: 24px; background: #33494c; display: flex; align-items: center; padding: 0 8px 0 16px; }
.tsearch span { margin: 0 auto 0 15px; font-size: 19px; letter-spacing: -.2px; color: #dfe3e3; }
.apps { display: flex; gap: 6px; margin: 4px 0 0 7px; }
.apps div { width: 60px; height: 60px; padding-top: 12px; position: relative; border-radius: 6px; }
.apps svg { width: 36px; height: 36px; margin: 0 auto; }
.run::after, .cur::after { content: ""; position: absolute; bottom: 1px; left: 26px; width: 8px; height: 5px; border-radius: 3px; background: #9aa39e; }
.cur { background: #24402f; border: 1px solid #2f4a3a; }
.apps .cur { padding-top: 11px; }
.cur::after { left: 17px; width: 24px; background: #4cc2ff; bottom: 0; }
.tray { margin-left: auto; display: flex; align-items: center; padding: 0 30px 2px 0; height: 70px; }
.t-cloud { margin-left: 26px; }
.t-wifi { margin-left: 22px; }
.t-vol { margin-left: 12px; }
.t-bat { margin-left: 12px; }
.clock { width: 98px; text-align: right; line-height: 24px; font-size: 17.500px; letter-spacing: -.2px; }
.count { width: 24px; height: 24px; margin-left: 11px; border-radius: 50%; background: #4cc2ff; color: #000; font-size: 15px; line-height: 24px; text-align: center; }
```
